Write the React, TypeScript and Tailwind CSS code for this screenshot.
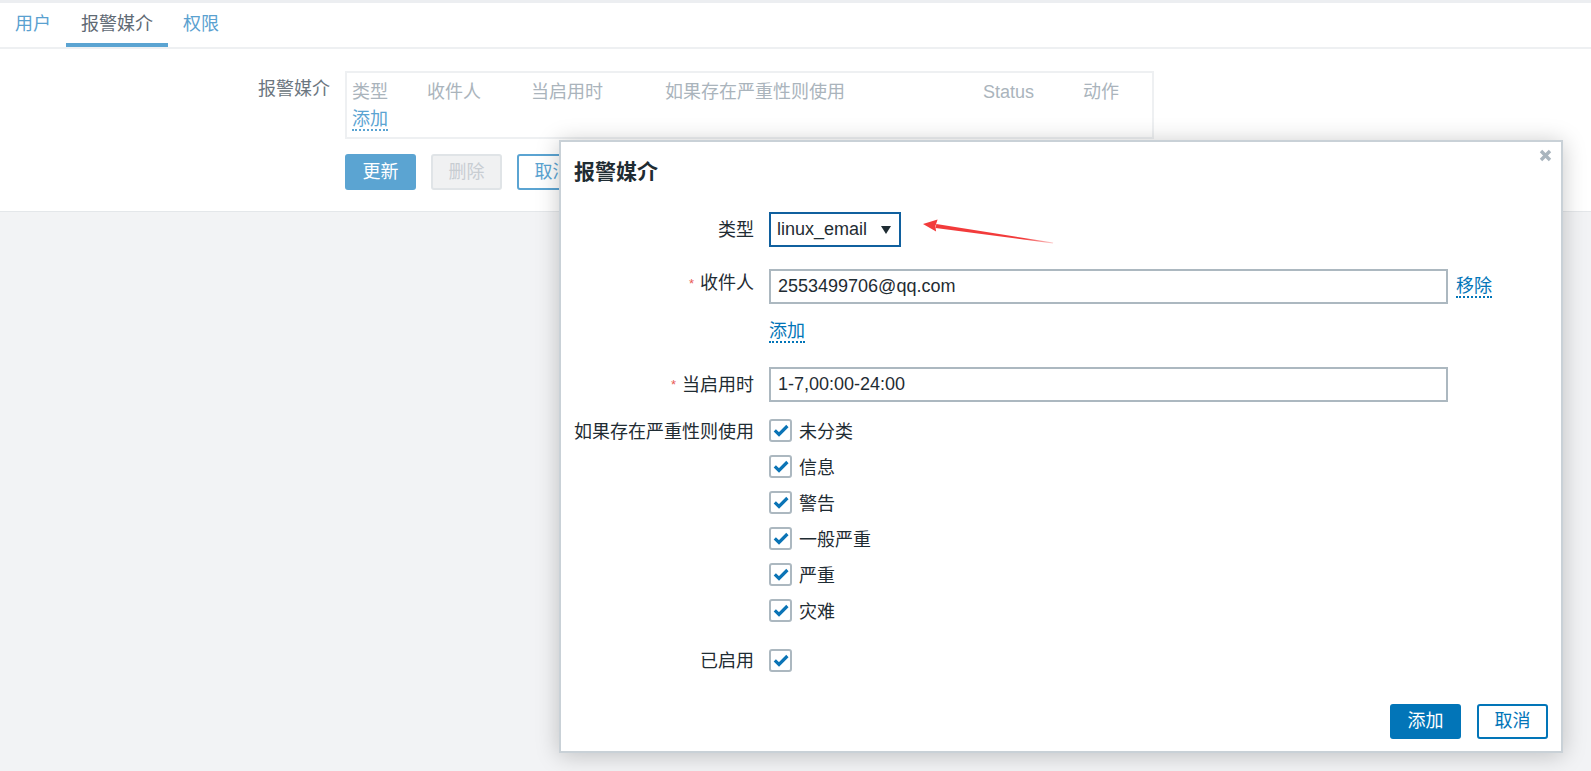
import React from "react";

const severities = ["未分类", "信息", "警告", "一般严重", "严重", "灾难"];

const tabs = [
  { label: "用户", active: false },
  { label: "报警媒介", active: true },
  { label: "权限", active: false },
];

const columns = [
  { title: "类型", width: "w-[75px]" },
  { title: "收件人", width: "w-[104px]" },
  { title: "当启用时", width: "w-[134px]" },
  { title: "如果存在严重性则使用", width: "w-[318px]" },
  { title: "Status", width: "w-[100px]" },
  { title: "动作", width: "w-[60px]" },
];

function CheckBox() {
  return (
    <span className="flex h-[23px] w-[23px] shrink-0 items-center justify-center rounded-[3px] border-2 border-[#acb8c0] bg-white">
      <svg width="16" height="13" viewBox="0 0 16 13">
        <path d="M1.8 6.4 L6 10.4 L14.4 2" fill="none" stroke="#0b74b6" strokeWidth="3.2" />
      </svg>
    </span>
  );
}

function Label({ text, required, className }: { text: string; required?: boolean; className: string }) {
  return (
    <div className={`flex justify-end ${className}`}>
      {required && <span className="mr-[6px] mt-[1px] text-[13px] leading-[22px] text-[#e85a57]">*</span>}
      <span>{text}</span>
    </div>
  );
}

function Arrow() {
  return (
    <svg
      className="absolute left-[915px] top-[214px]"
      width="145"
      height="34"
      viewBox="0 0 145 34"
    >
      <defs>
        <linearGradient id="tail" x1="0" y1="0" x2="1" y2="0">
          <stop offset="0" stopColor="#f23b3b" />
          <stop offset="0.75" stopColor="#f23b3b" />
          <stop offset="1" stopColor="#f23b3b" stopOpacity="0.25" />
        </linearGradient>
      </defs>
      <polygon points="8,10 22.6,5.6 20.4,12 21.1,17.4" fill="#f23b3b" />
      <polygon points="20.6,13.9 21.3,10.1 138.1,28.5 137.9,29.5" fill="url(#tail)" />
    </svg>
  );
}

export default function App() {
  return (
    <div className="relative h-[771px] w-full overflow-hidden bg-[#f2f3f5] font-['Liberation_Sans','Noto_Sans_CJK_SC',sans-serif] text-[18px]">
      <div className="h-[3px] bg-[#eceef1]" />

      <nav className="flex h-[46px] border-b-2 border-[#eef0f2] bg-white">
        {tabs.map((t) => (
          <div
            key={t.label}
            className={`flex h-[44px] flex-col px-[15px] pt-[10px] leading-[22px] ${
              t.active
                ? "border-b-4 border-[#5ba4d2] text-[#5f6a74]"
                : "text-[#5aa1d0]"
            }`}
          >
            {t.label}
          </div>
        ))}
      </nav>

      <section className="h-[163px] border-b border-[#e4e7ea] bg-white pt-[22px]">
        <div className="flex">
          <div className="w-[330px] pt-[7px] text-right leading-[22px] text-[#6b7680]">
            报警媒介
          </div>
          <div className="ml-[15px] flex flex-col">
            <div className="h-[68px] w-[809px] border-2 border-[#eef0f2] pl-[5px] pt-[8px] leading-[22px]">
              <div className="flex text-[#aab4bc]">
                {columns.map((c) => (
                  <div key={c.title} className={c.width}>
                    {c.title}
                  </div>
                ))}
              </div>
              <div className="mt-[5px]">
                <span className="inline-block border-b-2 border-dotted border-[#5ba4d2] leading-[19px] text-[#5ba4d2]">
                  添加
                </span>
              </div>
            </div>
            <div className="mt-[15px] flex gap-[15px]">
              <button className="h-[36px] w-[71px] rounded-[3px] bg-[#5ba4d2] text-white">
                更新
              </button>
              <button className="h-[36px] w-[71px] rounded-[3px] border-2 border-[#e0e4e7] bg-[#f0f1f2] text-[#c8cdd2]">
                删除
              </button>
              <button className="h-[36px] w-[71px] rounded-[3px] border-2 border-[#5ba4d2] bg-white text-[#5ba4d2]">
                取消
              </button>
            </div>
          </div>
        </div>
      </section>

      <div className="absolute left-[559px] top-[140px] flex h-[613px] w-[1004px] flex-col border-2 border-[#c9d1d7] bg-white shadow-[0_2px_22px_rgba(0,0,0,0.22)]">
        <svg className="absolute right-[9px] top-[7px]" width="13" height="13" viewBox="0 0 13 13">
          <path d="M2 2 L11 11 M11 2 L2 11" stroke="#a9b5be" strokeWidth="3.4" />
        </svg>

        <h2 className="mt-[17px] pl-[13px] text-[21px] font-bold leading-[26px] text-[#1f2c33]">
          报警媒介
        </h2>

        <div className="mt-[27px] grid grid-cols-[193px_1fr] gap-x-[15px] text-[#1f2c33]">
          <Label text="类型" className="h-[35px] items-center leading-[22px]" />
          <div>
            <div className="flex h-[35px] w-[132px] items-center justify-between border-2 border-[#10609e] pl-[6px] pr-[8px]">
              <span>linux_email</span>
              <svg width="10" height="8" viewBox="0 0 10 8">
                <polygon points="0,0 10,0 5,8" fill="#1f2c33" />
              </svg>
            </div>
          </div>

          <Label text="收件人" required className="mt-[22px] h-[35px] items-start pt-[3px] leading-[22px]" />
          <div className="mt-[22px] flex flex-col items-start">
            <div className="flex items-center">
              <div className="flex h-[35px] w-[679px] items-center border-2 border-[#acb8c0] pl-[7px]">
                2553499706@qq.com
              </div>
              <span className="ml-[8px] border-b-2 border-dotted border-[#0275b8] leading-[20px] text-[#0275b8]">
                移除
              </span>
            </div>
            <span className="mt-[17px] border-b-2 border-dotted border-[#0275b8] leading-[20px] text-[#0275b8]">
              添加
            </span>
          </div>

          <Label text="当启用时" required className="mt-[24px] h-[35px] items-center leading-[22px]" />
          <div className="mt-[24px]">
            <div className="flex h-[35px] w-[679px] items-center border-2 border-[#acb8c0] pl-[7px]">
              1-7,00:00-24:00
            </div>
          </div>

          <Label text="如果存在严重性则使用" className="mt-[17px] h-[25px] items-center leading-[22px]" />
          <div className="mt-[17px] flex flex-col gap-[13px]">
            {severities.map((s) => (
              <label key={s} className="flex h-[23px] items-center gap-[7px]">
                <CheckBox />
                <span className="mt-[3px] leading-[22px]">{s}</span>
              </label>
            ))}
          </div>

          <Label text="已启用" className="mt-[27px] h-[23px] items-center leading-[22px]" />
          <div className="mt-[27px] flex h-[23px]">
            <CheckBox />
          </div>
        </div>

        <div className="mt-[32px] flex justify-end gap-[16px] pr-[13px]">
          <button className="h-[35px] w-[71px] rounded-[3px] bg-[#0275b8] text-white">
            添加
          </button>
          <button className="h-[35px] w-[71px] rounded-[3px] border-2 border-[#0275b8] bg-white text-[#0275b8]">
            取消
          </button>
        </div>
      </div>

      <Arrow />
    </div>
  );
}
